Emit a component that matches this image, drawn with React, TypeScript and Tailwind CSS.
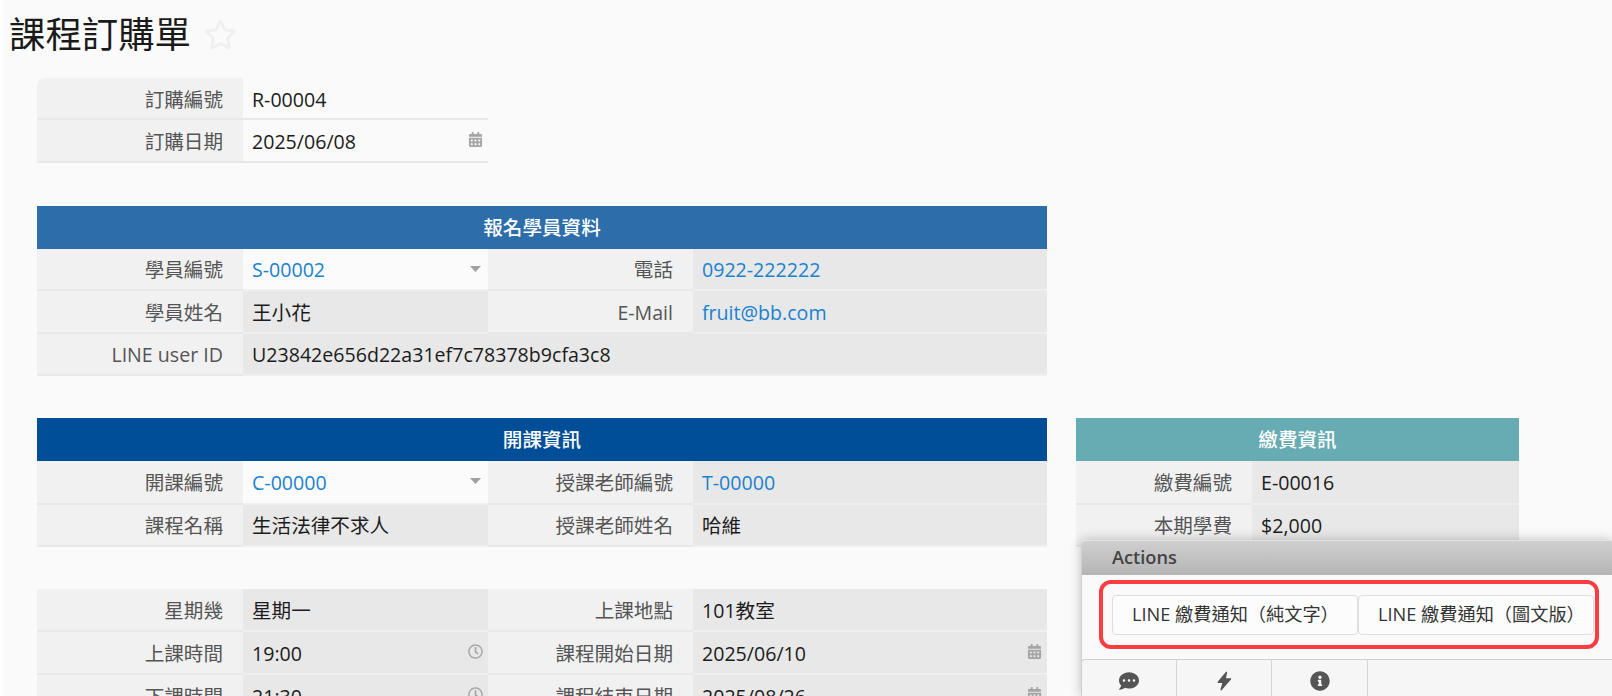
import React from "react";
import { FaRegStar, FaCalendarAlt, FaCommentDots, FaInfoCircle, FaRegClock } from "react-icons/fa";

type Cell = { label: string; value: string; kind?: "link" | "select" | "date" | "time" | "plain"; edit?: boolean };

const Caret = () => (
  <svg viewBox="0 0 11 6" className="absolute right-[7px] top-[17px] h-[6px] w-[11px] text-[#a0a0a0]">
    <path d="M0 0H11L5.5 6Z" fill="currentColor" />
  </svg>
);

const Value = ({ c, tall }: { c: Cell; tall?: boolean }) => (
  <div
    className={`relative flex flex-1 items-center border-b-2 border-[#efefef] pl-[9px] pt-[2px] text-[19.6px] ${tall ? "h-[43.2px]" : "h-[42.4px]"} ${c.edit ? "bg-[#fbfbfb]" : "bg-[#e8e8e8]"} ${c.kind === "link" || c.kind === "select" ? "text-[#1a82d0]" : "text-[#1c1c1c]"}`}
  >
    {c.value}
    {c.kind === "select" && <Caret />}
    {c.kind === "date" && <FaCalendarAlt className="absolute right-[5px] top-[12px] text-[15px] text-[#a5a5a5]" />}
    {c.kind === "time" && <FaRegClock className="absolute right-[5px] top-[12px] text-[15px] text-[#a5a5a5]" />}
  </div>
);

const Label = ({ text, w, tall }: { text: string; w: string; tall?: boolean }) => (
  <div className={`flex shrink-0 items-center justify-end border-b-2 border-[#e8e8e8] bg-[#f1f1f1] pr-[20px] pt-[2px] text-[19.6px] text-[#555] ${tall ? "h-[43.2px]" : "h-[42.4px]"} ${w}`}>
    {text}
  </div>
);

const Row2 = ({ a, b, tall }: { a: Cell; b: Cell; tall?: boolean }) => (
  <div className="flex">
    <Label text={a.label} w="w-[206px]" tall={tall} />
    <div className="flex w-[245px] shrink-0"><Value c={a} tall={tall} /></div>
    <Label text={b.label} w="w-[205px]" tall={tall} />
    <Value c={b} tall={tall} />
  </div>
);

const Header = ({ title, color, h }: { title: string; color: string; h: string }) => (
  <div className={`flex items-center justify-center text-[19.6px] font-medium text-white ${h} ${color}`}>{title}</div>
);

export default function App() {
  return (
    <div className="h-[696px] w-[1612px] overflow-hidden bg-white pl-[3px] font-['Open_Sans','Noto_Sans_CJK_TC',sans-serif]">
      <div className="relative h-full bg-[#fafafa]">
        <div className="flex h-[78px] items-start pl-[6px] pt-[11px]">
          <h1 className="text-[36.4px] leading-[46px] text-[#1a1a1a]">課程訂購單</h1>
          <FaRegStar className="ml-[13px] mt-[7px] text-[33px] text-[#efefef]" />
        </div>

        <div className="ml-[34px] w-[451px] overflow-hidden rounded-tl-[8px]">
          <div className="flex">
            <Label text="訂購編號" w="w-[206px]" />
            <div className="flex h-[42.4px] flex-1 items-center border-b-2 border-[#e8e8e8] pl-[9px] pt-[2px] text-[19.6px] text-[#1c1c1c]">R-00004</div>
          </div>
          <div className="flex">
            <Label text="訂購日期" w="w-[206px]" />
            <div className="relative flex h-[42.4px] flex-1 items-center border-b-2 border-[#e8e8e8] pl-[9px] pt-[2px] text-[19.6px] text-[#1c1c1c]">
              2025/06/08
              <FaCalendarAlt className="absolute right-[5px] top-[12px] text-[15px] text-[#a5a5a5]" />
            </div>
          </div>
        </div>

        <div className="ml-[34px] mt-[43.2px] w-[1010px]">
          <Header title="報名學員資料" color="bg-[#2d6da9]" h="h-[43px]" />
          <Row2 a={{ label: "學員編號", value: "S-00002", kind: "select", edit: true }} b={{ label: "電話", value: "0922-222222", kind: "link" }} />
          <Row2 a={{ label: "學員姓名", value: "王小花" }} b={{ label: "E-Mail", value: "fruit@bb.com", kind: "link" }} />
          <div className="flex">
            <Label text="LINE user ID" w="w-[206px]" />
            <Value c={{ label: "", value: "U23842e656d22a31ef7c78378b9cfa3c8" }} />
          </div>
        </div>

        <div className="mt-[41.8px] flex items-start">
          <div className="ml-[34px] w-[1010px]">
            <Header title="開課資訊" color="bg-[#004e97]" h="h-[43.5px]" />
            <Row2 tall a={{ label: "開課編號", value: "C-00000", kind: "select", edit: true }} b={{ label: "授課老師編號", value: "T-00000", kind: "link" }} />
            <Row2 a={{ label: "課程名稱", value: "生活法律不求人" }} b={{ label: "授課老師姓名", value: "哈維" }} />
            <div className="h-[42px]" />
            <Row2 tall a={{ label: "星期幾", value: "星期一" }} b={{ label: "上課地點", value: "101教室" }} />
            <Row2 tall a={{ label: "上課時間", value: "19:00", kind: "time" }} b={{ label: "課程開始日期", value: "2025/06/10", kind: "date" }} />
            <Row2 tall a={{ label: "下課時間", value: "21:30", kind: "time" }} b={{ label: "課程結束日期", value: "2025/08/26", kind: "date" }} />
          </div>
          <div className="ml-[29px] w-[443px]">
            <Header title="繳費資訊" color="bg-[#67abb3]" h="h-[43.5px]" />
            <div className="flex">
              <Label text="繳費編號" w="w-[176px]" tall />
              <Value c={{ label: "", value: "E-00016" }} tall />
            </div>
            <div className="flex">
              <Label text="本期學費" w="w-[176px]" />
              <Value c={{ label: "", value: "$2,000" }} />
            </div>
          </div>
        </div>

        <div className="absolute bottom-0 left-[1078px] right-0 top-[540px] rounded-tl-[4px] border-l border-[#d0d0d0] bg-[#fafafa] shadow-[0_0_12px_rgba(0,0,0,0.25)]">
          <div className="flex h-[35px] items-center rounded-tl-[4px] border-t border-[#e4e4e4] bg-gradient-to-b from-[#cfcfcf] to-[#b5b5b5] pl-[30px] text-[18.2px] font-semibold text-[#444]">Actions</div>
          <div className="relative flex h-[84px] items-start pl-[30px] pt-[20px]">
            <button className="flex h-[40px] w-[246px] items-center justify-start rounded-[4px] border border-[#dedede] bg-[#fcfcfc] pl-[19px] text-[18.2px] text-[#333]">LINE 繳費通知（純文字）</button>
            <button className="flex h-[40px] w-[236px] items-center justify-start whitespace-nowrap rounded-[4px] border border-[#dedede] bg-[#fcfcfc] pl-[19px] text-[18.2px] text-[#333]">LINE 繳費通知（圖文版）</button>
            <div className="absolute left-[17px] top-[5px] h-[69px] w-[500px] rounded-[12px] border-[4px] border-[#fb3c40]" />
          </div>
          <div className="-ml-px flex h-[37px] rounded-tl-[4px] border-l border-t border-[#cfcfcf] bg-[#f6f6f6] text-[#555]">
            <div className="flex w-[95px] justify-center border-r border-[#d5d5d5] pt-[11px]"><FaCommentDots className="text-[20px]" /></div>
            <div className="flex w-[95px] justify-center border-r border-[#d5d5d5] pt-[11px]">
              <svg viewBox="0 0 24 24" className="h-[20px] w-[20px]">
                <path d="M15 1.5L5 13.5H11L8.5 22.5L20 9.5H13.5Z" fill="currentColor" stroke="currentColor" strokeWidth="1.5" strokeLinejoin="round" />
              </svg>
            </div>
            <div className="flex w-[96px] justify-center border-r border-[#d5d5d5] pt-[11px]"><FaInfoCircle className="text-[20px]" /></div>
          </div>
        </div>
      </div>
    </div>
  );
}
